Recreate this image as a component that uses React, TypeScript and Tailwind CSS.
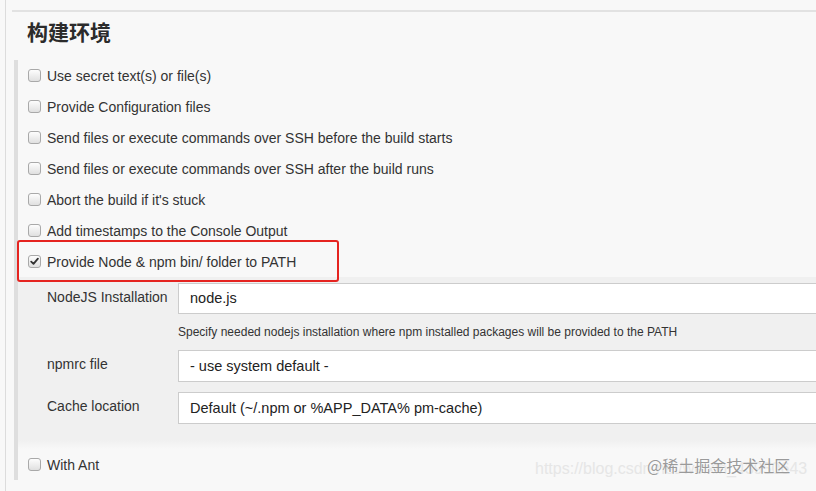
import React from "react";

function Box({ checked = false }: { checked?: boolean }) {
  return (
    <span className="relative inline-flex h-[13px] w-[13px] shrink-0 items-center justify-center rounded-[3px] border border-[#a9a9a9] bg-linear-to-b from-[#fdfdfd] to-[#e0e0e0]">
      {checked && (
        <svg width="9" height="9" viewBox="0 0 9 9" className="absolute">
          <path d="M1.2 4.6 L3.5 6.9 L7.9 1.6" fill="none" stroke="#333" strokeWidth="1.8" strokeLinecap="round" strokeLinejoin="round" />
        </svg>
      )}
    </span>
  );
}

function Row({ label, checked = false }: { label: string; checked?: boolean }) {
  return (
    <div className="flex h-[31px] items-center pl-[10px]">
      <Box checked={checked} />
      <span className="ml-[6px] text-[14px] leading-[16px] text-[#333]">{label}</span>
    </div>
  );
}

function Field({ label, value, h }: { label: string; value: string; h: string }) {
  return (
    <div className="flex">
      <div className="w-[160px] shrink-0 pl-[29px] pt-[6px] text-[14px] leading-[16px] text-[#333]">{label}</div>
      <div className={`-mr-[4px] flex flex-1 items-center border border-[#ccc] bg-white pl-[11px] pt-[1px] text-[14.5px] text-[#222] ${h}`}>
        {value}
      </div>
    </div>
  );
}

export default function App() {
  return (
    <div
      className="relative h-[491px] w-[816px] overflow-hidden bg-[#f8f8f8]"
      style={{ fontFamily: '"Liberation Sans", Arial, "Noto Sans CJK SC", sans-serif' }}
    >
      <div className="ml-[5px] h-full border-l border-[#dcdcdc]">
        <div className="pt-[10px]">
          <div className="ml-[6px] border-t-2 border-[#e2e2e2] pl-[15px] pt-[5px]">
            <h2 className="text-[21px] font-bold leading-[28px] text-[#2b2b2b]" style={{ fontFamily: '"Noto Sans CJK SC", sans-serif' }}>
              构建环境
            </h2>
          </div>
        </div>
        <div className="ml-[8px] mt-[15px] border-l-4 border-[#dedede]">
          <Row label="Use secret text(s) or file(s)" />
          <Row label="Provide Configuration files" />
          <Row label="Send files or execute commands over SSH before the build starts" />
          <Row label="Send files or execute commands over SSH after the build runs" />
          <Row label="Abort the build if it's stuck" />
          <Row label="Add timestamps to the Console Output" />
          <Row label="Provide Node & npm bin/ folder to PATH" checked />
          <div className="bg-[#f0f0f0] pt-[6px]">
            <Field label="NodeJS Installation" value="node.js" h="h-[31px]" />
            <div className="flex h-[36px] items-center pl-[160px] text-[12px] text-[#333]">
              Specify needed nodejs installation where npm installed packages will be provided to the PATH
            </div>
            <Field label="npmrc file" value="- use system default -" h="h-[32px]" />
            <div className="h-[10px]" />
            <Field label="Cache location" value="Default (~/.npm or %APP_DATA% pm-cache)" h="h-[32px]" />
            <div className="h-[16px]" />
          </div>
          <div className="h-[9px] bg-linear-to-b from-[#f0f0f0] to-[#f8f8f8]" />
          <Row label="With Ant" />
        </div>
      </div>

      <div className="absolute left-[17px] top-[240px] h-[42px] w-[322px] rounded-[3px] border-2 border-[#e52420]" />

      <div className="pointer-events-none absolute left-[535px] top-[457px] text-[16px] text-[#e6e6e6]">
        https://blog.csdn.net/weixin_43950643
      </div>
      <div
        className="pointer-events-none absolute left-[647px] top-[454px] text-[16px] leading-[22px] text-[#9a9a9a]"
        style={{ fontFamily: '"Noto Sans CJK SC", sans-serif', textShadow: "0 0 2px #fff" }}
      >
        @稀土掘金技术社区
      </div>
    </div>
  );
}
